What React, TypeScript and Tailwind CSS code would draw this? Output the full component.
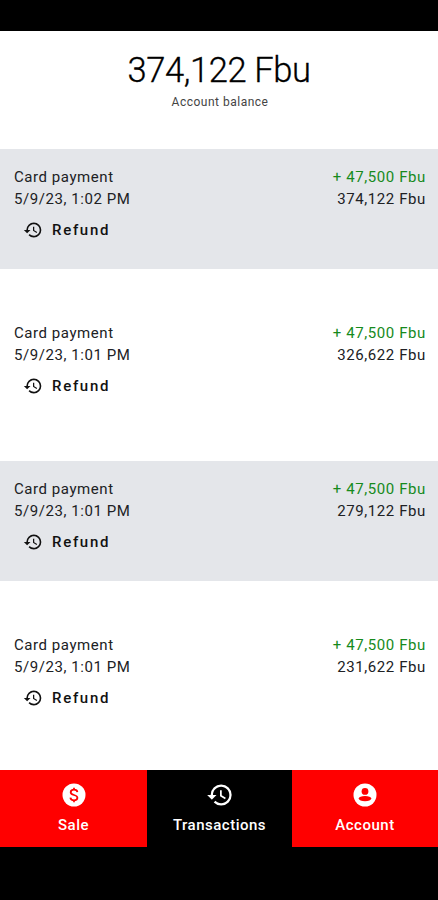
import React from 'react';
import { MdHistory } from 'react-icons/md';

interface Transaction {
  id: number;
  title: string;
  date: string;
  amount: string;
  balance: string;
}

const transactions: Transaction[] = [
  { id: 1, title: 'Card payment', date: '5/9/23, 1:02 PM', amount: '+ 47,500 Fbu', balance: '374,122 Fbu' },
  { id: 2, title: 'Card payment', date: '5/9/23, 1:01 PM', amount: '+ 47,500 Fbu', balance: '326,622 Fbu' },
  { id: 3, title: 'Card payment', date: '5/9/23, 1:01 PM', amount: '+ 47,500 Fbu', balance: '279,122 Fbu' },
  { id: 4, title: 'Card payment', date: '5/9/23, 1:01 PM', amount: '+ 47,500 Fbu', balance: '231,622 Fbu' },
];

const SaleIcon = () => (
  <svg width="28" height="28" viewBox="-2 -2 28 28" fill="none">
    <circle cx="12" cy="12" r="11.5" fill="currentColor" />
    <path
      d="M15.4 9.2C15.2 7.6 13.9 6.7 12 6.7s-3.3.9-3.3 2.5c0 1.7 1.4 2.3 3.3 2.8s3.4 1.2 3.4 2.8-1.4 2.5-3.4 2.5-3.4-1-3.6-2.7M12 4.7v2M12 17.3v2"
      stroke="#ff0000"
      strokeWidth="1.8"
    />
  </svg>
);

const AccountIcon = () => (
  <svg width="28" height="28" viewBox="-2 -2 28 28">
    <circle cx="12" cy="12" r="11.5" fill="currentColor" />
    <circle cx="12" cy="8.4" r="3.4" fill="#ff0000" />
    <ellipse cx="12" cy="15.6" rx="6.3" ry="2.6" fill="#ff0000" />
  </svg>
);

const tabs = [
  { label: 'Sale', icon: <SaleIcon />, active: false },
  { label: 'Transactions', icon: <MdHistory size={28} />, active: true },
  { label: 'Account', icon: <AccountIcon />, active: false },
];

const TransactionRow: React.FC<{ item: Transaction; shaded: boolean }> = ({ item, shaded }) => (
  <li className={`h-[120px] shrink-0 pt-[17px] pl-3.5 pr-3 ${shaded ? 'bg-[#e4e6ea]' : 'bg-white'}`}>
    <div className="flex justify-between text-[15px] leading-[22px] text-[#202124]">
      <div className="tracking-[0.56px]">
        <p>{item.title}</p>
        <p>{item.date}</p>
      </div>
      <div className="text-right tracking-[0.6px]">
        <p className="text-[#168a1c]">{item.amount}</p>
        <p>{item.balance}</p>
      </div>
    </div>
    <button className="mt-2.5 ml-[9px] flex h-5 items-center gap-2.5 text-[15px] font-medium tracking-[1.7px] text-[#111]">
      <MdHistory size={20} className="-mr-px" />
      Refund
    </button>
  </li>
);

export default function App() {
  return (
    <div className="flex h-[900px] w-[438px] flex-col overflow-hidden bg-white font-['Roboto',sans-serif]">
      {/* Status bar */}
      <div className="h-[31px] shrink-0 bg-black" />

      {/* Balance */}
      <header className="h-[118px] shrink-0 pt-[19px] text-center">
        <h1 className="text-[34.5px] leading-10 font-light tracking-[-0.4px] text-black [-webkit-text-stroke:0.3px_black]">
          374,122 Fbu
        </h1>
        <p className="mt-1 ml-0.5 text-xs leading-4 tracking-[0.5px] text-[#444]">Account balance</p>
      </header>

      <ul className="flex min-h-0 flex-1 flex-col gap-9 overflow-hidden">
        {transactions.map((item, index) => (
          <TransactionRow key={item.id} item={item} shaded={index % 2 === 0} />
        ))}
      </ul>

      {/* Bottom tabs */}
      <nav className="grid h-[77px] shrink-0 grid-cols-[147px_145px_146px]">
        {tabs.map(({ label, icon, active }) => (
          <button
            key={label}
            className={`flex flex-col items-center pt-[11px] text-white ${active ? 'bg-black' : 'bg-[#ff0000]'}`}
          >
            {icon}
            <span className="mt-1.5 text-[15px] leading-5 font-medium tracking-[0.5px]">{label}</span>
          </button>
        ))}
      </nav>
      <div className="h-[53px] shrink-0 bg-black" />
    </div>
  );
}
